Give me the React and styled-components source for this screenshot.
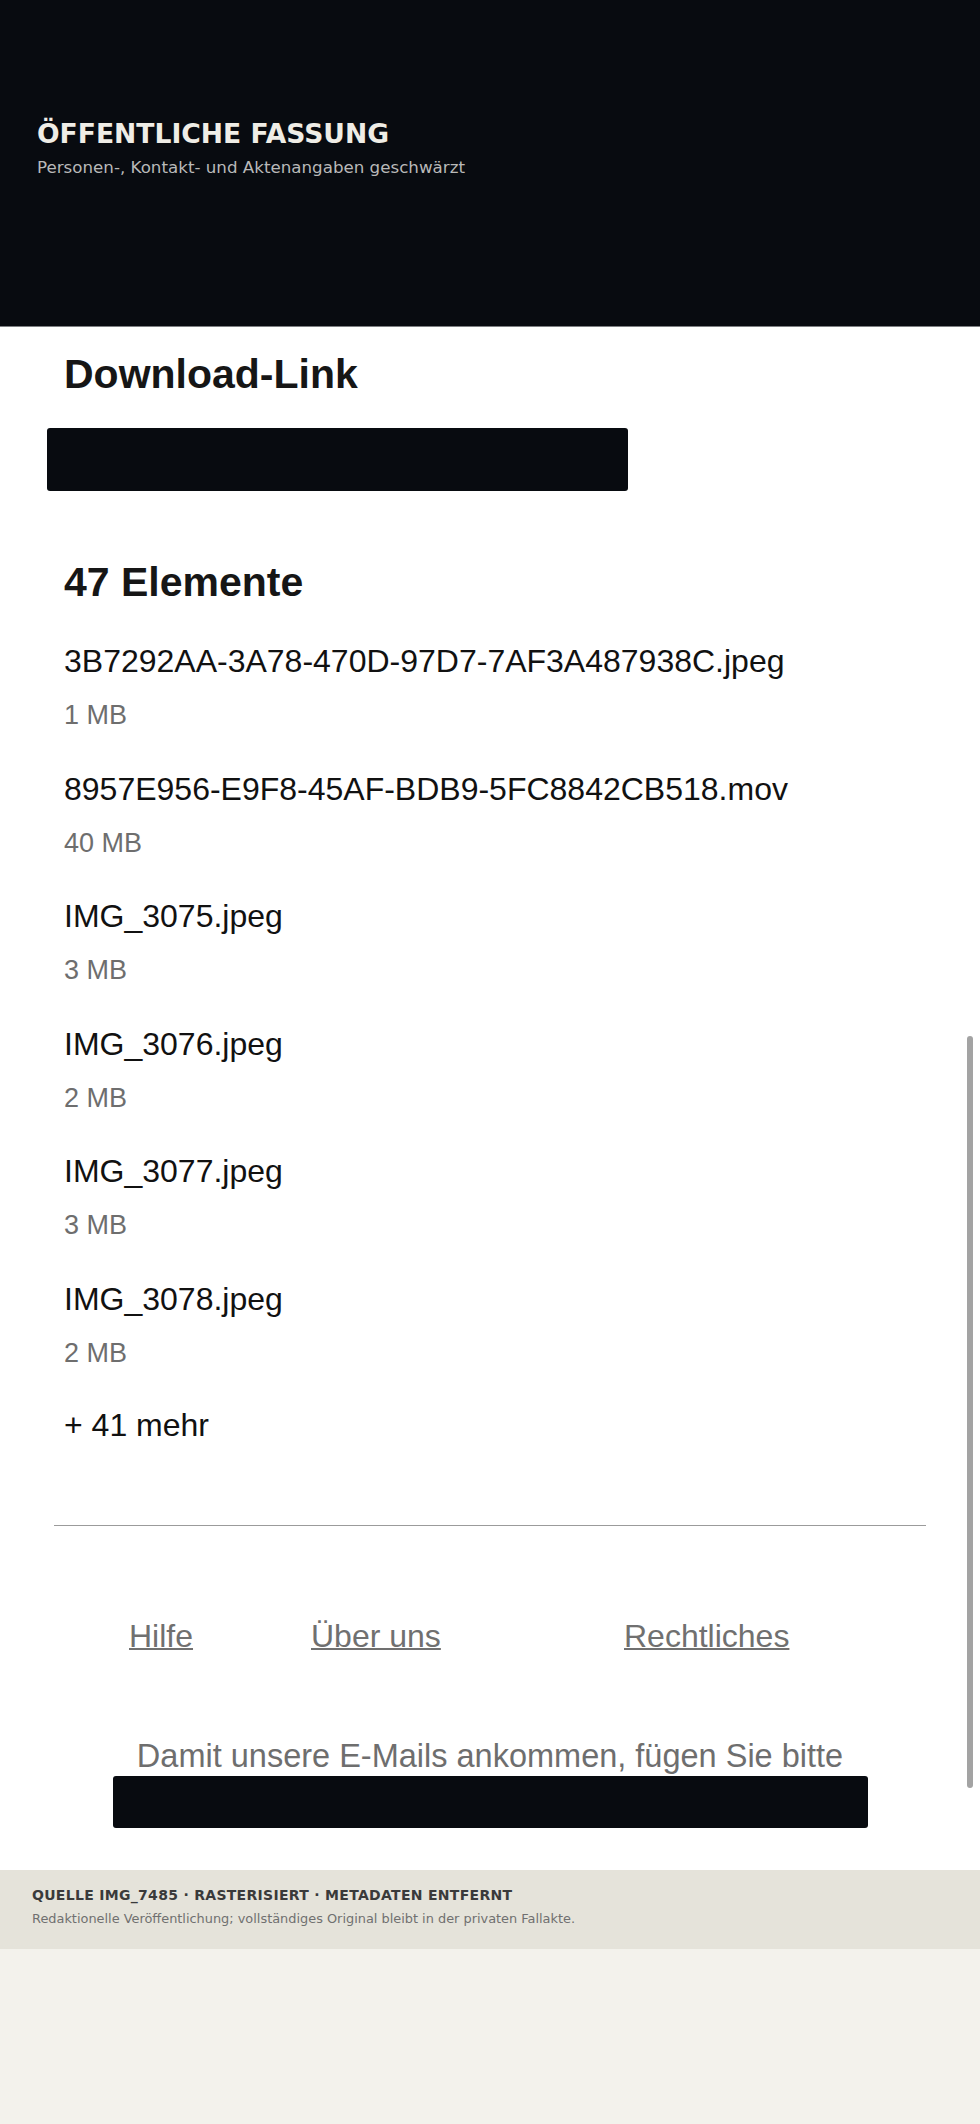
import styled, { createGlobalStyle } from "styled-components";

const files = [
  { name: "3B7292AA-3A78-470D-97D7-7AF3A487938C.jpeg", size: "1 MB" },
  { name: "8957E956-E9F8-45AF-BDB9-5FC8842CB518.mov", size: "40 MB" },
  { name: "IMG_3075.jpeg", size: "3 MB" },
  { name: "IMG_3076.jpeg", size: "2 MB" },
  { name: "IMG_3077.jpeg", size: "3 MB" },
  { name: "IMG_3078.jpeg", size: "2 MB" },
];

const links = ["Hilfe", "Über uns", "Rechtliches"];

const App = () => {
  return (
    <Page>
      <GlobalStyle />
      <Banner>
        <BannerTitle>ÖFFENTLICHE FASSUNG</BannerTitle>
        <BannerNote>Personen-, Kontakt- und Aktenangaben geschwärzt</BannerNote>
      </Banner>

      <Mail>
        <SectionTitle>Download-Link</SectionTitle>
        <Redacted $width={581} $height={63} $left={47} $top={30} />

        <SectionTitle $top={67}>47 Elemente</SectionTitle>
        <FileList>
          {files.map((f) => (
            <FileItem key={f.name}>
              <FileName>{f.name}</FileName>
              <FileSize>{f.size}</FileSize>
            </FileItem>
          ))}
        </FileList>
        <More>+ 41 mehr</More>

        <Divider />

        <FooterLinks>
          {links.map((l) => (
            <FooterLink key={l} href="#">
              {l}
            </FooterLink>
          ))}
        </FooterLinks>

        <Notice>Damit unsere E-Mails ankommen, fügen Sie bitte</Notice>
        <Redacted $width={755} $height={52} $center />

        <ScrollThumb />
      </Mail>

      <SourceBand>
        <SourceLine>QUELLE IMG_7485 · RASTERISIERT · METADATEN ENTFERNT</SourceLine>
        <SourceNote>
          Redaktionelle Veröffentlichung; vollständiges Original bleibt in der
          privaten Fallakte.
        </SourceNote>
      </SourceBand>
    </Page>
  );
};

const GlobalStyle = createGlobalStyle`
  html, body {
    margin: 0;
    background: #f3f2ec;
  }
  * {
    box-sizing: border-box;
  }
`;

const Page = styled.div`
  width: 980px;
  min-height: 2124px;
  background: #f3f2ec;
`;

const Banner = styled.header`
  height: 327px;
  padding: 118px 37px 0;
  background: #080b10;
  border-bottom: 1px solid #7d7f82;
  font-family: "DejaVu Sans", "Noto Sans", sans-serif;
`;

const BannerTitle = styled.h1`
  margin: 0;
  font-size: 26.6px;
  line-height: 1.2;
  font-weight: bold;
  color: #efede6;
`;

const BannerNote = styled.p`
  margin: 6px 0 0;
  font-size: 16.7px;
  line-height: 1.4;
  color: #b9b9b9;
`;

const Mail = styled.main`
  position: relative;
  padding: 23px 0 42px;
  background: #ffffff;
  font-family: "Liberation Sans", Arial, sans-serif;
  color: #111111;
`;

const SectionTitle = styled.h2`
  margin: ${(p) => p.$top || 0}px 0 0 64px;
  font-size: 41px;
  line-height: 48px;
  font-weight: bold;
  color: #161616;
`;

const Redacted = styled.div`
  width: ${(p) => p.$width}px;
  height: ${(p) => p.$height}px;
  margin: ${(p) => (p.$center ? "0 auto" : `${p.$top}px 0 0 ${p.$left}px`)};
  background: #080b10;
  border-radius: 3px;
`;

const FileList = styled.ul`
  list-style: none;
  margin: 35px 0 0 64px;
  padding: 0;
  display: flex;
  flex-direction: column;
  gap: 35.5px;
`;

const FileItem = styled.li`
  display: flex;
  flex-direction: column;
`;

const FileName = styled.div`
  font-size: 32px;
  line-height: 40px;
`;

const FileSize = styled.div`
  margin-top: 16px;
  font-size: 27px;
  line-height: 36px;
  color: #6e6e6e;
`;

const More = styled.div`
  margin: 34.5px 0 0 64px;
  font-size: 32px;
  line-height: 40px;
`;

const Divider = styled.hr`
  margin: 80px 54px 0;
  height: 0;
  border: none;
  border-top: 1px solid #9b9b9b;
`;

const FooterLinks = styled.nav`
  margin-top: 91px;
  padding-left: 129px;
  display: grid;
  grid-template-columns: 182px 313px auto;
`;

const FooterLink = styled.a`
  justify-self: start;
  font-size: 32px;
  line-height: 38.4px;
  color: #707070;
  text-decoration: underline;
  text-decoration-thickness: 2px;
`;

const Notice = styled.p`
  margin: 82px 0 0;
  font-size: 32.5px;
  line-height: 38.4px;
  text-align: center;
  color: #6e6e6e;
`;

const ScrollThumb = styled.div`
  position: absolute;
  top: 709px;
  right: 7px;
  width: 6px;
  height: 752px;
  border-radius: 3px;
  background: #a3a3a3;
`;

const SourceBand = styled.footer`
  padding: 16px 32px 21px;
  background: #e5e3da;
  font-family: "DejaVu Sans", "Noto Sans", sans-serif;
`;

const SourceLine = styled.div`
  font-size: 14px;
  line-height: 1.3;
  font-weight: bold;
  letter-spacing: 0.3px;
  color: #3a3a3a;
`;

const SourceNote = styled.div`
  margin-top: 6px;
  font-size: 12.9px;
  line-height: 1.4;
  color: #707070;
`;

export default App;
